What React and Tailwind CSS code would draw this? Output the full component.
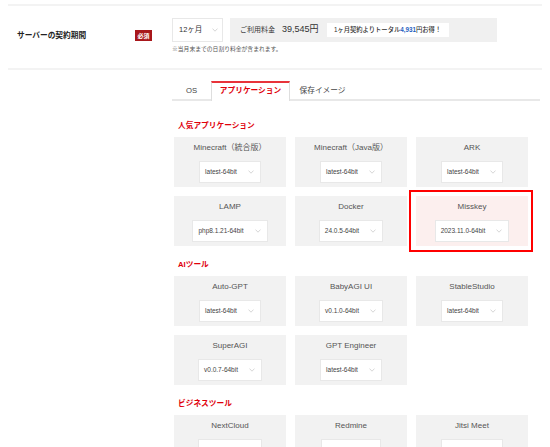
import React from "react";

const FONT = { fontFamily: '"Liberation Sans", "Noto Sans CJK JP", sans-serif' };

const Chevron = () => (
  <svg width="6" height="4" viewBox="0 0 6 4" className="shrink-0">
    <path d="M0.5 0.6 L3 3.2 L5.5 0.6" stroke="#c4c4c4" fill="none" strokeWidth="0.7" />
  </svg>
);

const VersionSelect = ({ value }) => (
  <div className="inline-flex h-[22px] items-center border border-[#e8e8e8] bg-white pl-[5px] pr-[6px] text-[6.5px] text-[#444]">
    <span>{value}</span>
    <span className="ml-[11px]">
      <Chevron />
    </span>
  </div>
);

const AppCard = ({ name, version, selected }) => (
  <div
    className={`relative flex h-[50px] flex-col items-center pt-[6px] ${
      selected ? "bg-[#fcefee]" : "bg-[#f2f2f2]"
    }`}
  >
    <div className="h-[10px] text-[8px] leading-[10px] text-[#555]">{name}</div>
    <div className="mt-[4px]">
      <VersionSelect value={version} />
    </div>
    {selected && (
      <span className="pointer-events-none absolute -top-[6px] -bottom-[6px] -left-[7px] -right-[5px] border-2 border-[#ff0000]" />
    )}
  </div>
);

const Section = ({ title, apps, first }) => (
  <div className={first ? "mt-[20px]" : "mt-[14px]"}>
    <h3 className="ml-[6px] h-[10px] text-[7.7px] font-bold leading-[10px] text-[#e0000b]">
      {title}
    </h3>
    <div className="mt-[6px] ml-[2px] grid grid-cols-[112px_112px_112px] gap-[9px]">
      {apps.map((app) => (
        <AppCard key={app.name} {...app} />
      ))}
    </div>
  </div>
);

const sections = [
  {
    title: "人気アプリケーション",
    apps: [
      { name: "Minecraft（統合版）", version: "latest-64bit" },
      { name: "Minecraft（Java版）", version: "latest-64bit" },
      { name: "ARK", version: "latest-64bit" },
      { name: "LAMP", version: "php8.1.21-64bit" },
      { name: "Docker", version: "24.0.5-64bit" },
      { name: "Misskey", version: "2023.11.0-64bit", selected: true },
    ],
  },
  {
    title: "AIツール",
    apps: [
      { name: "Auto-GPT", version: "latest-64bit" },
      { name: "BabyAGI UI", version: "v0.1.0-64bit" },
      { name: "StableStudio", version: "latest-64bit" },
      { name: "SuperAGI", version: "v0.0.7-64bit" },
      { name: "GPT Engineer", version: "latest-64bit" },
    ],
  },
  {
    title: "ビジネスツール",
    apps: [
      { name: "NextCloud", version: "27.0.1-64bit" },
      { name: "Redmine", version: "5.0.5-64bit" },
      { name: "Jitsi Meet", version: "latest-64bit" },
    ],
  },
];

export default function App() {
  return (
    <div className="min-h-screen bg-white px-2 pb-10" style={FONT}>
      {/* contract period row */}
      <div className="mt-1 flex border-y-2 border-[#f3f3f3] pt-[12px] pb-[15px]">
        <div className="flex w-[164px] shrink-0 items-center justify-between pl-[9px] pr-[20px]">
          <span className="text-[7.7px] font-bold text-[#222]">サーバーの契約期間</span>
          <span className="bg-[#a8171b] px-[2.5px] py-[1.5px] text-[6px] font-bold leading-[8px] text-white">
            必須
          </span>
        </div>
        <div className="flex-1">
          <div className="flex">
            <div className="flex h-[24px] w-[51px] items-center border border-[#e8e8e8] bg-white pl-[6px] text-[7.5px] text-[#333]">
              <span>12ヶ月</span>
              <span className="ml-[10px]">
                <Chevron />
              </span>
            </div>
            <div className="ml-[7px] flex h-[24px] w-[267px] items-center bg-[#f0f0f0] pl-[10px]">
              <span className="text-[7px] text-[#333]">ご利用料金</span>
              <span className="ml-[7px] text-[9px] text-[#333]">39,545円</span>
              <span className="ml-[8px] flex h-[14px] w-[122px] items-center justify-center bg-white text-[6.3px] font-medium text-[#333]">
                1ヶ月契約よりトータル<span className="font-bold text-[#1f5fbf]">4,931</span>円お得！
              </span>
            </div>
          </div>
          <p className="mt-[3px] text-[5.8px] leading-[8px] text-[#555]">
            ※当月末までの日割り料金が含まれます。
          </p>
        </div>
      </div>

      {/* OS / application tabs */}
      <div className="ml-[164px] mt-[13px] mr-[2px]">
        <div className="flex h-[18px] items-end border-b-2 border-[#e8e8e8]">
          <div className="flex h-full w-[39px] items-center justify-center text-[7.7px] text-[#444]">
            OS
          </div>
          <div className="-mb-[2px] flex h-[20px] w-[79px] items-center justify-center border-x border-t-2 border-x-[#dedede] border-t-[#e8333a] bg-white pb-[2px] text-[7.7px] font-bold text-[#e0000b]">
            アプリケーション
          </div>
          <div className="flex h-full w-[65px] items-center justify-center text-[7.7px] text-[#444]">
            保存イメージ
          </div>
        </div>

        {sections.map((s, i) => (
          <Section key={s.title} {...s} first={i === 0} />
        ))}
      </div>
    </div>
  );
}
